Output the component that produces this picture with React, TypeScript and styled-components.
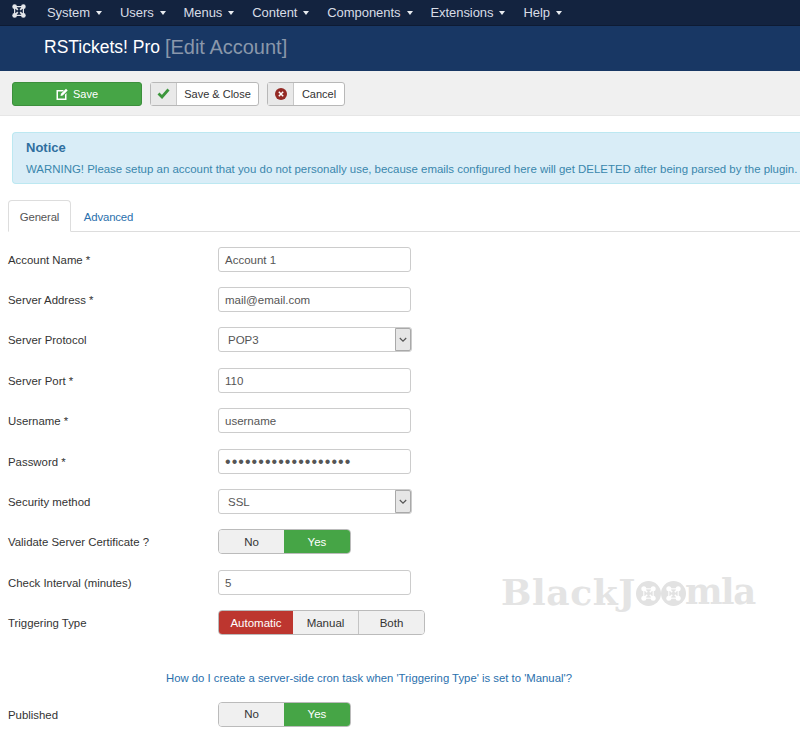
import React from "react";
import styled, { createGlobalStyle } from "styled-components";

const Global = createGlobalStyle`
  html, body { margin: 0; padding: 0; background: #fff; }
  body { font-family: "Liberation Sans", Arial, sans-serif; font-size: 12px; color: #333; overflow: hidden; }
  * { box-sizing: border-box; }
`;

const Page = styled.div`
  position: relative;
  width: 800px;
  height: 735px;
  overflow: hidden;
`;

const NavBar = styled.nav`
  height: 26px;
  background: #13233f;
  border-bottom: 1px solid #0e1b33;
  display: flex;
  align-items: center;
  padding-left: 12px;
`;

const NavLogo = styled.span`
  display: flex;
  margin: 0 21px 3px 0;
  flex: none;
`;

const NavItem = styled.span`
  display: inline-flex;
  align-items: center;
  color: #d8dde6;
  font-size: 13px;
  margin-right: 17.9px;
  line-height: 24px;
  letter-spacing: -0.05px;
`;

const Caret = styled.i`
  display: inline-block;
  margin-left: 6px;
  margin-top: 1px;
  border-left: 3.5px solid transparent;
  border-right: 3.5px solid transparent;
  border-top: 4px solid #e8ebf0;
`;

const Header = styled.header`
  height: 45px;
  background: #183764;
  display: flex;
  align-items: center;
  padding: 0 0 2px 44px;
  color: #fff;
  font-size: 17.5px;
  white-space: pre;
`;

const HeaderMuted = styled.span`
  color: #8a97ab;
  font-size: 20px;
`;

const Toolbar = styled.div`
  height: 45px;
  background: #f0f0f0;
  border-bottom: 1px solid #e6e6e6;
  display: flex;
  align-items: center;
  padding: 1px 0 0 12px;
  gap: 8px;
`;

const PrimaryButton = styled.div`
  width: 130px;
  height: 24px;
  background: #46a546;
  border: 1px solid #3c8f3c;
  border-radius: 3px;
  color: #fff;
  font-size: 11px;
  display: flex;
  align-items: center;
  justify-content: center;
  gap: 5px;
`;

const ToolButton = styled.div`
  height: 24px;
  background: #fff;
  border: 1px solid #b8b8b8;
  border-radius: 3px;
  display: flex;
  align-items: stretch;
  font-size: 11px;
  color: #333;
`;

const ToolIcon = styled.span`
  width: 26px;
  background: #e9e9e9;
  border-right: 1px solid #c8c8c8;
  display: flex;
  align-items: center;
  justify-content: center;
`;

const ToolLabel = styled.span<{ $w: number }>`
  width: ${(p) => p.$w}px;
  display: flex;
  align-items: center;
  justify-content: center;
`;

const Notice = styled.div`
  margin: 16px 0 0 12px;
  height: 52px;
  background: #d9edf7;
  border: 1px solid #bce8f1;
  border-right: none;
  border-radius: 4px 0 0 4px;
  padding: 7px 0 0 13px;
  color: #3a87ad;
  white-space: nowrap;
`;

const NoticeTitle = styled.div`
  color: #2f6f9f;
  font-weight: bold;
  font-size: 13px;
  line-height: 16px;
  margin-bottom: 5px;
`;

const NoticeText = styled.div`
  font-size: 11.45px;
  line-height: 16px;
`;

const Tabs = styled.div`
  margin: 16px 0 0 8px;
  height: 32px;
  border-bottom: 1px solid #ddd;
  display: flex;
`;

const Tab = styled.div<{ $active?: boolean }>`
  height: 32px;
  width: 63px;
  margin-right: 6px;
  display: flex;
  align-items: center;
  justify-content: center;
  font-size: 11.4px;
  letter-spacing: -0.17px;
  padding-top: 1px;
  color: ${(p) => (p.$active ? "#555" : "#2a70ad")};
  ${(p) =>
    p.$active
      ? `background:#fff;border:1px solid #ddd;border-bottom:1px solid #fff;border-radius:4px 4px 0 0;`
      : ""}
`;

const Form = styled.div`
  padding: 15px 0 0 8px;
  display: flex;
  flex-direction: column;
  gap: 16px;
`;

const Row = styled.div`
  display: flex;
  align-items: center;
  height: 24.4px;
`;

const Label = styled.label`
  width: 210px;
  flex: none;
  font-size: 11.4px;
  color: #333;
  padding-top: 1px;
`;

const Field = styled.div<{ $password?: boolean }>`
  width: 193px;
  height: 25px;
  background: #fff;
  border: 1px solid #ccc;
  border-radius: 3px;
  padding: 1px 6px 0;
  display: flex;
  align-items: center;
  font-size: ${(p) => (p.$password ? "16px" : "11.5px")};
  color: #555;
  letter-spacing: ${(p) => (p.$password ? "1.05px" : "0")};
`;

const Select = styled.div`
  width: 194px;
  height: 25px;
  background: #fff;
  border: 1px solid #ccc;
  border-radius: 3px;
  display: flex;
  align-items: center;
  justify-content: space-between;
  padding-left: 9px;
  font-size: 11.5px;
  color: #555;
`;

const SelectArrow = styled.span`
  width: 16px;
  height: 23px;
  background: #e6e6e6;
  border: 1px solid #a9a9a9;
  border-radius: 0 2px 2px 0;
  display: flex;
  align-items: center;
  justify-content: center;
`;

const Toggle = styled.div`
  display: inline-flex;
  height: 25px;
  border: 1px solid #bbb;
  border-radius: 4px;
  overflow: hidden;
`;

const ToggleOption = styled.div<{ $w: number; $on?: "green" | "red"; $sep?: boolean }>`
  width: ${(p) => p.$w}px;
  display: flex;
  align-items: center;
  justify-content: center;
  font-size: 11.5px;
  background: ${(p) => (p.$on === "green" ? "#46a546" : p.$on === "red" ? "#bd362f" : "#f0f0f0")};
  color: ${(p) => (p.$on ? "#fff" : "#333")};
  border-left: ${(p) => (p.$sep ? "1px solid #c4c4c4" : "none")};
`;

const HelpLink = styled.div`
  margin: 36px 0 0 166px;
  height: 14px;
  line-height: 14px;
  font-size: 11.33px;
  color: #2a70ad;
  white-space: nowrap;
`;

const Published = styled(Row)`
  margin-top: 2px;
`;

const Watermark = styled.div`
  position: absolute;
  left: 501px;
  top: 571px;
  display: flex;
  align-items: center;
  height: 42px;
  font-family: "DejaVu Serif", "Liberation Serif", serif;
  font-weight: bold;
  font-size: 36px;
  color: #e4e4e4;
  letter-spacing: 0.6px;
  line-height: 42px;
`;

const WatermarkTail = styled.span`
  letter-spacing: -1.4px;
  margin-left: -1px;
  font-size: 35.5px;
`;

const Circle = styled.span`
  width: 25px;
  height: 25px;
  border-radius: 50%;
  background: #e2e2e2;
  display: inline-flex;
  align-items: center;
  justify-content: center;
  margin: 2px 0 0 0;
`;

const JoomlaMark = ({ size, color, weight }: { size: number; color: string; weight: number }) => (
  <svg width={size} height={size} viewBox="0 0 24 24" fill="none" stroke={color}>
    <rect x="4.5" y="4.5" width="15" height="15" strokeWidth={weight * 0.7} />
    <circle cx="4.5" cy="4.5" r="4" fill={color} stroke="none" />
    <circle cx="19.5" cy="4.5" r="4" fill={color} stroke="none" />
    <circle cx="4.5" cy="19.5" r="4" fill={color} stroke="none" />
    <circle cx="19.5" cy="19.5" r="4" fill={color} stroke="none" />
    <path d="M6 6 L10 10 M18 6 L14 10 M18 18 L14 14 M6 18 L10 14" strokeWidth={weight} />
  </svg>
);

const rowsA: [string, "input" | "select" | "yes" | "pw", string][] = [
  ["Account Name *", "input", "Account 1"],
  ["Server Address *", "input", "mail@email.com"],
  ["Server Protocol", "select", "POP3"],
  ["Server Port *", "input", "110"],
  ["Username *", "input", "username"],
  ["Password *", "pw", "•••••••••••••••••••"],
  ["Security method", "select", "SSL"],
  ["Validate Server Certificate ?", "yes", ""],
  ["Check Interval (minutes)", "input", "5"],
];

const YesNo = () => (
  <Toggle>
    <ToggleOption $w={65}>No</ToggleOption>
    <ToggleOption $w={66} $on="green">Yes</ToggleOption>
  </Toggle>
);

const Chevron = () => (
  <svg width="8" height="6" viewBox="0 0 8 6" fill="none" stroke="#555" strokeWidth="1.2">
    <path d="M0.8 1 L4 4.2 L7.2 1" />
  </svg>
);

export default function App() {
  return (
    <Page>
      <Global />
      <NavBar>
        <NavLogo><JoomlaMark size={14} color="#e4e6ea" weight={3} /></NavLogo>
        {["System", "Users", "Menus", "Content", "Components", "Extensions", "Help"].map((n) => (
          <NavItem key={n}>{n}<Caret /></NavItem>
        ))}
      </NavBar>
      <Header>RSTickets! Pro <HeaderMuted>[Edit Account]</HeaderMuted></Header>
      <Toolbar>
        <PrimaryButton>
          <svg width="12" height="12" viewBox="0 0 12 12">
            <path d="M0.5 2h7.5L6.5 3.5H2v7h7V6.5l1.5-1.5v7h-10z" fill="#fff" />
            <path d="M4.5 8l.5-2.2L10 .8l1.7 1.7-5 5z" fill="#fff" />
          </svg>
          Save
        </PrimaryButton>
        <ToolButton>
          <ToolIcon>
            <svg width="13" height="11" viewBox="0 0 13 11" fill="none" stroke="#3c963c" strokeWidth="2.8">
              <path d="M1.5 5.5L5 9l6.5-7.5" />
            </svg>
          </ToolIcon>
          <ToolLabel $w={81}>Save &amp; Close</ToolLabel>
        </ToolButton>
        <ToolButton>
          <ToolIcon>
            <svg width="12" height="12" viewBox="0 0 12 12">
              <circle cx="6" cy="6" r="6" fill="#942a25" />
              <path d="M3.8 3.8l4.4 4.4M8.2 3.8L3.8 8.2" stroke="#fff" strokeWidth="1.5" />
            </svg>
          </ToolIcon>
          <ToolLabel $w={50}>Cancel</ToolLabel>
        </ToolButton>
      </Toolbar>
      <Notice>
        <NoticeTitle>Notice</NoticeTitle>
        <NoticeText>
          WARNING! Please setup an account that you do not personally use, because emails configured here will get DELETED after being parsed by the plugin.
        </NoticeText>
      </Notice>
      <Tabs>
        <Tab $active>General</Tab>
        <Tab>Advanced</Tab>
      </Tabs>
      <Form>
        {rowsA.map(([label, kind, value]) => (
          <Row key={label}>
            <Label>{label}</Label>
            {kind === "input" && <Field>{value}</Field>}
            {kind === "pw" && <Field $password>{value}</Field>}
            {kind === "select" && (
              <Select>
                {value}
                <SelectArrow><Chevron /></SelectArrow>
              </Select>
            )}
            {kind === "yes" && <YesNo />}
          </Row>
        ))}
        <Row>
          <Label>Triggering Type</Label>
          <Toggle>
            <ToggleOption $w={74} $on="red">Automatic</ToggleOption>
            <ToggleOption $w={65}>Manual</ToggleOption>
            <ToggleOption $w={66} $sep>Both</ToggleOption>
          </Toggle>
        </Row>
      </Form>
      <HelpLink>How do I create a server-side cron task when 'Triggering Type' is set to 'Manual'?</HelpLink>
      <Form>
        <Published>
          <Label>Published</Label>
          <YesNo />
        </Published>
      </Form>
      <Watermark>
        BlackJ
        <Circle><JoomlaMark size={15} color="#fff" weight={2.4} /></Circle>
        <Circle><JoomlaMark size={15} color="#fff" weight={2.4} /></Circle>
        <WatermarkTail>mla</WatermarkTail>
      </Watermark>
    </Page>
  );
}
